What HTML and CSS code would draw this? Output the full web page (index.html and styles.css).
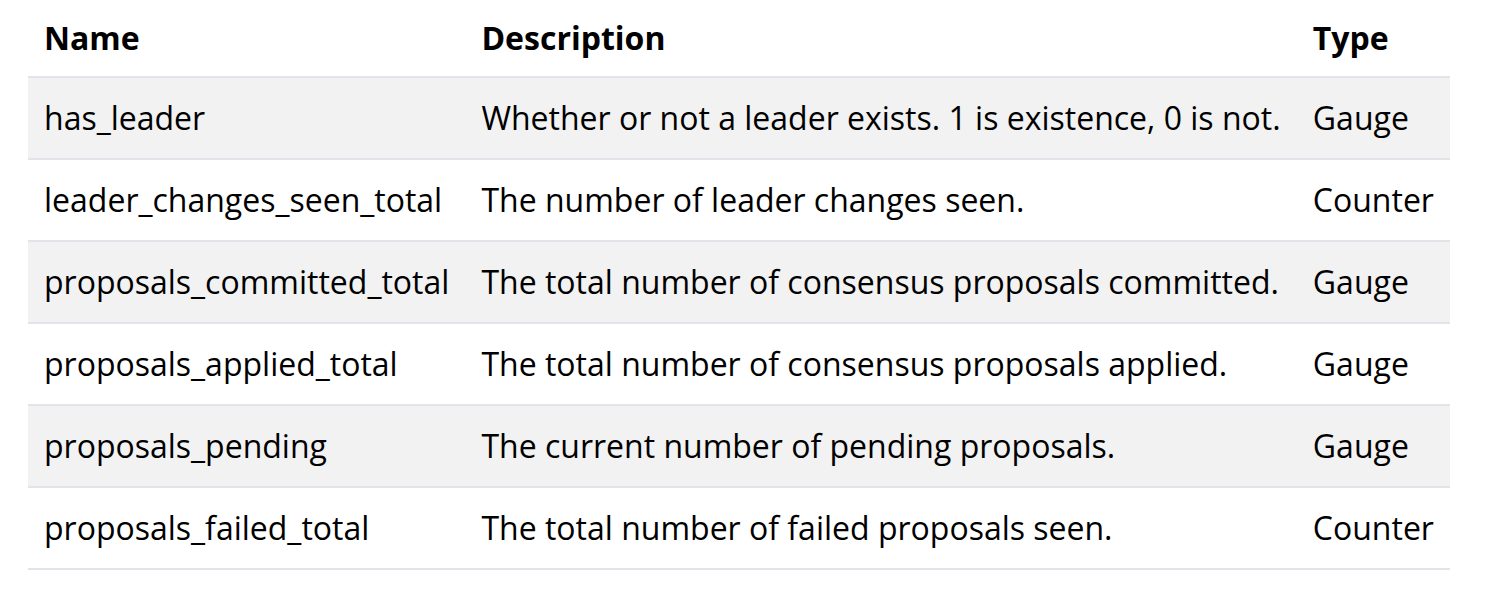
FILE: index.html
```html
<!DOCTYPE html>
<html>
<head>
<meta charset="utf-8">
<link rel="stylesheet" href="styles.css">
</head>
<body>
<table class="metrics">
  <thead>
    <tr><th>Name</th><th>Description</th><th>Type</th></tr>
  </thead>
  <tbody>
    <tr><td>has_leader</td><td>Whether or not a leader exists. 1 is existence, 0 is not.</td><td>Gauge</td></tr>
    <tr><td>leader_changes_seen_total</td><td>The number of leader changes seen.</td><td>Counter</td></tr>
    <tr><td>proposals_committed_total</td><td>The total number of consensus proposals committed.</td><td>Gauge</td></tr>
    <tr><td>proposals_applied_total</td><td>The total number of consensus proposals applied.</td><td>Gauge</td></tr>
    <tr><td>proposals_pending</td><td>The current number of pending proposals.</td><td>Gauge</td></tr>
    <tr><td>proposals_failed_total</td><td>The total number of failed proposals seen.</td><td>Counter</td></tr>
  </tbody>
</table>
</body>
</html>
```
FILE: styles.css
```css
html, body {
  margin: 0;
  padding: 0;
  background: #ffffff;
}
body {
  padding: 0 52px 0 28px;
  font-family: "Open Sans", "Liberation Sans", sans-serif;
  color: #000;
}
.metrics {
  width: 100%;
  border-collapse: collapse;
  font-size: 32px;
  line-height: 40px;
}
.metrics th {
  text-align: left;
  font-weight: 700;
  padding: 18px 16px;
  border-bottom: 2px solid #e1e4e8;
}
.metrics td {
  padding: 20px 16px;
  border-bottom: 2px solid #e1e4e8;
  white-space: nowrap;
}
.metrics tbody tr:nth-child(odd) {
  background: #f2f2f2;
}
```
